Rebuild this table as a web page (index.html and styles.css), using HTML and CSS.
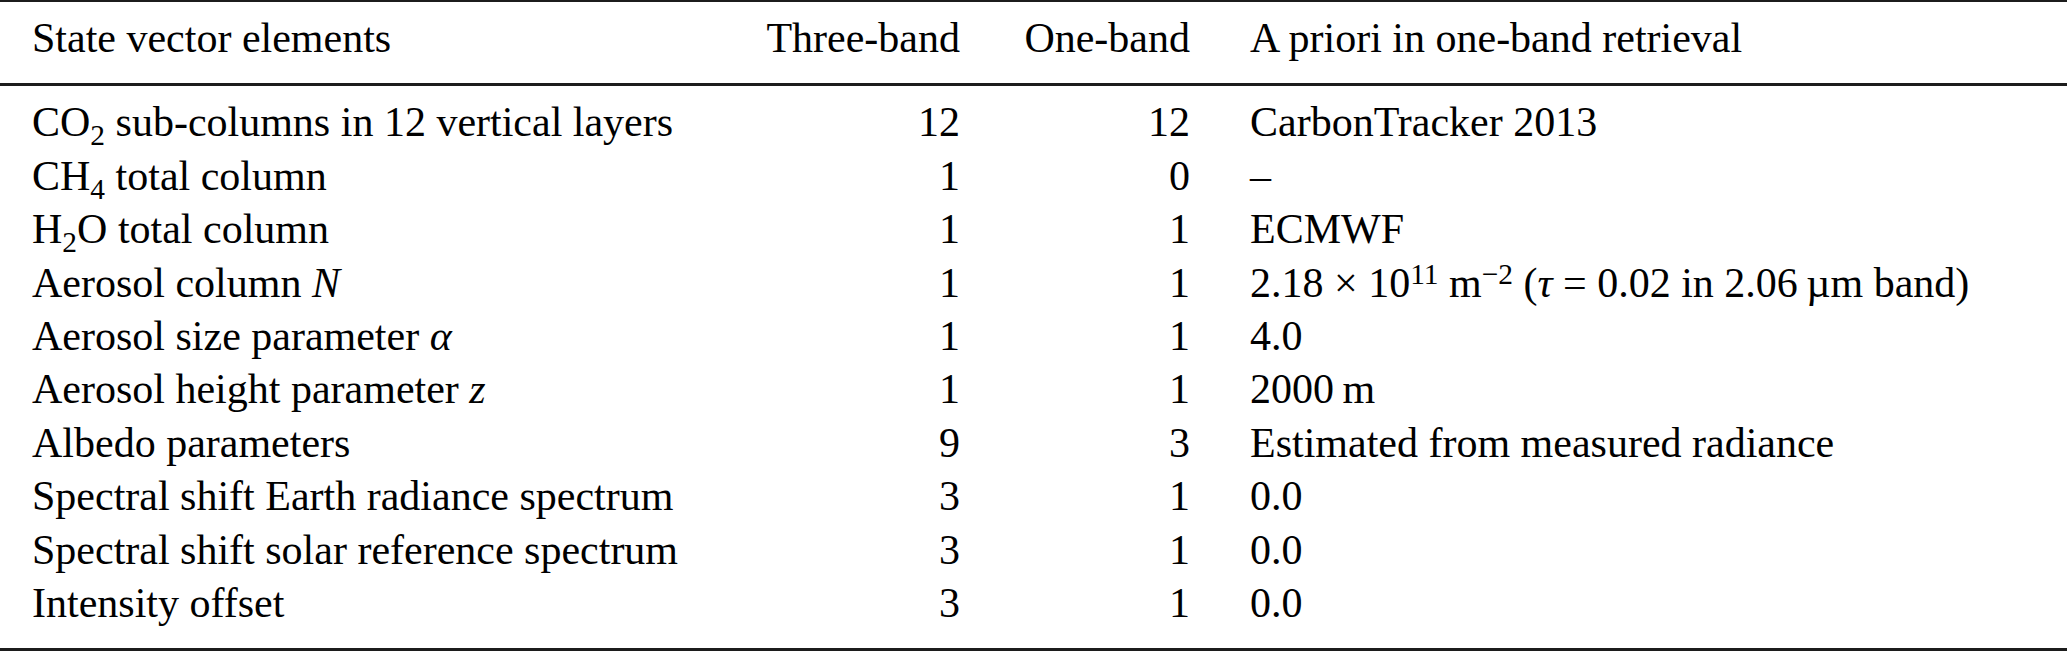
FILE: index.html
```html
<!DOCTYPE html>
<html lang="en">
<head>
  <meta charset="UTF-8" />
  <title>State vector elements</title>
  <link rel="stylesheet" href="styles.css">
</head>
<body>
  <table class="state-table">
    <colgroup>
      <col class="col-name" />
      <col class="col-three" />
      <col class="col-one" />
      <col class="col-prior" />
    </colgroup>
    <thead>
      <tr>
        <th class="name">State vector elements</th>
        <th class="num">Three-band</th>
        <th class="num">One-band</th>
        <th class="prior">A priori in one-band retrieval</th>
      </tr>
    </thead>
    <tbody>
      <tr>
        <td class="name">CO<sub>2</sub> sub-columns in 12 vertical layers</td>
        <td class="num">12</td>
        <td class="num">12</td>
        <td class="prior">CarbonTracker 2013</td>
      </tr>
      <tr>
        <td class="name">CH<sub>4</sub> total column</td>
        <td class="num">1</td>
        <td class="num">0</td>
        <td class="prior">&ndash;</td>
      </tr>
      <tr>
        <td class="name">H<sub>2</sub>O total column</td>
        <td class="num">1</td>
        <td class="num">1</td>
        <td class="prior">ECMWF</td>
      </tr>
      <tr>
        <td class="name">Aerosol column <i>N</i></td>
        <td class="num">1</td>
        <td class="num">1</td>
        <td class="prior">2.18 &times; 10<sup>11</sup> m<sup>&minus;2</sup> (<i>&tau;</i> = 0.02 in 2.06&thinsp;&micro;m band)</td>
      </tr>
      <tr>
        <td class="name">Aerosol size parameter <i>&alpha;</i></td>
        <td class="num">1</td>
        <td class="num">1</td>
        <td class="prior">4.0</td>
      </tr>
      <tr>
        <td class="name">Aerosol height parameter <i>z</i></td>
        <td class="num">1</td>
        <td class="num">1</td>
        <td class="prior">2000&thinsp;m</td>
      </tr>
      <tr>
        <td class="name">Albedo parameters</td>
        <td class="num">9</td>
        <td class="num">3</td>
        <td class="prior">Estimated from measured radiance</td>
      </tr>
      <tr>
        <td class="name">Spectral shift Earth radiance spectrum</td>
        <td class="num">3</td>
        <td class="num">1</td>
        <td class="prior">0.0</td>
      </tr>
      <tr>
        <td class="name">Spectral shift solar reference spectrum</td>
        <td class="num">3</td>
        <td class="num">1</td>
        <td class="prior">0.0</td>
      </tr>
      <tr>
        <td class="name">Intensity offset</td>
        <td class="num">3</td>
        <td class="num">1</td>
        <td class="prior">0.0</td>
      </tr>
    </tbody>
  </table>
</body>
</html>
```

FILE: styles.css
```css
* {
  margin: 0;
  padding: 0;
  box-sizing: border-box;
}

body {
  background: white;
  color: #000;
  font-family: "Liberation Serif", "DejaVu Serif", serif;
  font-size: 42px;
  line-height: 53.4px;
}

.state-table {
  width: 100%;
  border-collapse: separate;
  border-spacing: 0;
  table-layout: fixed;
  border-top: 2px solid #1c1c1c;
  border-bottom: 3px solid #1c1c1c;
}

.col-name { width: 760px; }
.col-three { width: 200px; }
.col-one { width: 230px; }

th, td {
  font-weight: normal;
  white-space: nowrap;
  padding: 0;
}

thead th {
  padding-top: 10px;
  padding-bottom: 18px;
  border-bottom: 3px solid #1c1c1c;
}

tbody tr:first-child td {
  padding-top: 10px;
}

tbody tr:last-child td {
  padding-bottom: 18px;
}

.name {
  text-align: left;
  padding-left: 32px;
}

.num {
  text-align: right;
}

.prior {
  text-align: left;
  padding-left: 60px;
}

sub, sup {
  font-size: 0.7em;
  line-height: 0;
}

sub {
  vertical-align: -0.3em;
}

sup {
  vertical-align: 0.45em;
}
```
